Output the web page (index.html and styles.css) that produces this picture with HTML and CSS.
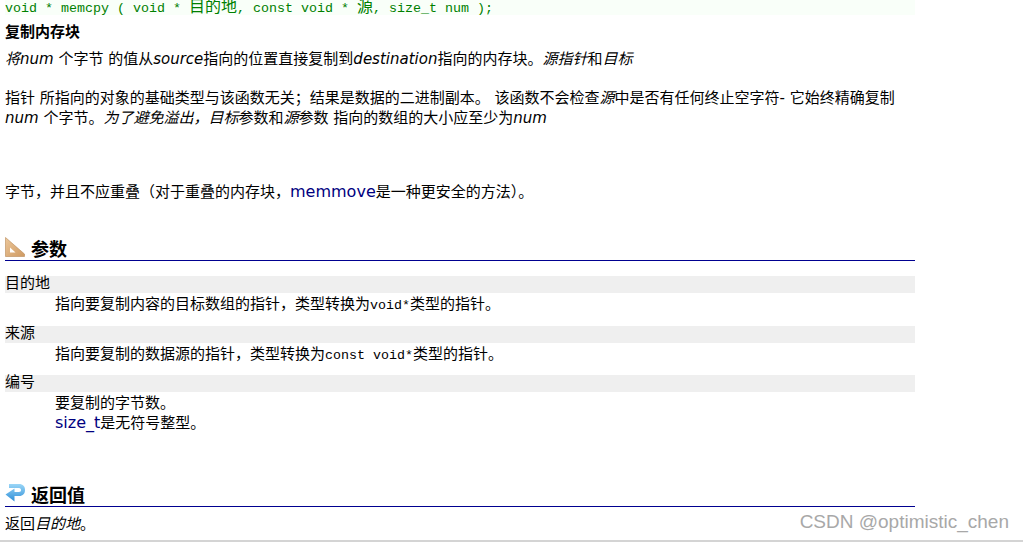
FILE: index.html
```html
<!DOCTYPE html>
<html lang="zh-CN">
<head>
<meta charset="utf-8">
<title>memcpy</title>
<link rel="stylesheet" href="styles.css">
</head>
<body>
<main class="page">
  <pre class="proto">void * memcpy ( void * <span class="wide">目的地</span>, const void * <span class="wide">源</span>, size_t num );</pre>
  <div class="brief">复制内存块</div>
  <p class="intro"><i>将num</i> 个字节 的值从<i>source</i>指向的位置直接复制到<i>destination</i>指向的内存块。<i>源指针</i>和<i>目标</i></p>
  <p class="para">指针 所指向的对象的基础类型与该函数无关；结果是数据的二进制副本。 该函数不会检查<i>源</i>中是否有任何终止空字符- 它始终精确复制<br><i>num</i> 个字节。<i>为了避免溢出，目标</i>参数和<i>源</i>参数 指向的数组的大小应至少为<i>num</i></p>
  <p class="tail">字节，并且不应重叠（对于重叠的内存块，<a class="link">memmove</a>是一种更安全的方法）。</p>

  <h2 class="section params">
    <svg class="icon" viewBox="0 0 20 20" width="20" height="20" aria-hidden="true">
      <defs><linearGradient id="wood" x1="0" y1="0" x2="1" y2="1"><stop offset="0" stop-color="#ecc79a"/><stop offset="1" stop-color="#cf9a62"/></linearGradient></defs>
      <path fill="url(#wood)" fill-rule="evenodd" d="M0.500 0.500 L19.500 17 V19.500 H0.500 Z M5 10.500 V15.500 H10.500 Z"/>
      <path fill="none" stroke="#b98a58" stroke-width=".6" d="M0.500 0.500 L19.500 17 V19.500 H0.500 Z"/>
    </svg>
    <span>参数</span>
  </h2>
  <dl class="defs">
    <dt>目的地</dt>
    <dd>指向要复制内容的目标数组的指针，类型转换为<code>void*</code>类型的指针。</dd>
    <dt>来源</dt>
    <dd class="tight">指向要复制的数据源的指针，类型转换为<code>const void*</code>类型的指针。</dd>
    <dt>编号</dt>
    <dd class="tall">要复制的字节数。<br><a class="link">size_t</a>是无符号整型。</dd>
  </dl>

  <h2 class="section returns">
    <svg class="icon" viewBox="0 0 20 20" width="20" height="20" aria-hidden="true">
      <defs><linearGradient id="blue" x1="0" y1="0" x2="0" y2="1"><stop offset="0" stop-color="#9ad6f7"/><stop offset="1" stop-color="#2f8fd8"/></linearGradient></defs>
      <path fill="url(#blue)" d="M4 1 H14 C18 1 20 3.500 20 7 C20 10.500 18 13 14 13 H9.500 V18.500 L0.500 11.500 L9.500 5.500 V9 H14 C15.500 9 16 8 16 7 C16 6 15.500 5 14 5 H4 Z"/>
    </svg>
    <span>返回值</span>
  </h2>
  <p class="ret">返回<i>目的地</i>。</p>
</main>
<div class="watermark">CSDN @optimistic_chen</div>
</body>
</html>
```
FILE: styles.css
```css
html, body {
  margin: 0;
  height: 542px;
  overflow: hidden;
  background: #fff;
}
body {
  position: relative;
  box-sizing: border-box;
  border-bottom: 2px solid #d4d4d4;
  font-family: "DejaVu Sans", "Noto Sans CJK SC", sans-serif;
  font-size: 15px;
  color: #000;
}
.page {
  width: 910px;
  margin-left: 5px;
}
.proto {
  margin: 0;
  height: 15px;
  line-height: 16px;
  background: #f9fff9;
  color: #008000;
  font-family: "Liberation Mono", "Noto Sans CJK SC", monospace;
  font-size: 13.33px;
  white-space: pre;
}
.wide { font-size: 16px; }
.brief {
  margin-top: 8px;
  height: 19px;
  line-height: 19px;
  font-weight: bold;
  font-size: 15px;
}
p { margin: 0; line-height: 20px; }
.intro { margin-top: 7px; }
.para { margin-top: 19px; }
.tail { margin-top: 54px; }
i { font-style: italic; }
.link { color: #000080; font-size: 16px; line-height: 1; }
.section {
  display: flex;
  align-items: flex-end;
  gap: 6px;
  margin: 0;
  height: 25px;
  border-bottom: 1px solid #000090;
  font-size: 18px;
  font-weight: bold;
  line-height: 20px;
}
.params { margin-top: 33px; }
.returns { margin-top: 48px; }
.icon { margin-bottom: 3px; }
.defs { margin: 15px 0 0; }
dt {
  height: 17px;
  line-height: 18px;
  background: #efefef;
  font-family: "Liberation Mono", "Noto Sans CJK SC", monospace;
  font-size: 15px;
}
dd {
  margin: 0 0 12px 50px;
  padding-top: 1px;
  height: 20px;
  line-height: 20px;
}
dd.tight { margin-bottom: 11px; }
dd.tall { height: 40px; }
code {
  font-family: "Liberation Mono", monospace;
  font-size: 13.33px;
  line-height: 1;
}
.ret { margin-top: 7px; }
.watermark {
  position: absolute;
  right: 14px;
  bottom: 7px;
  font-family: "Liberation Sans", sans-serif;
  font-size: 19px;
  color: #a8a8a8;
}
```
